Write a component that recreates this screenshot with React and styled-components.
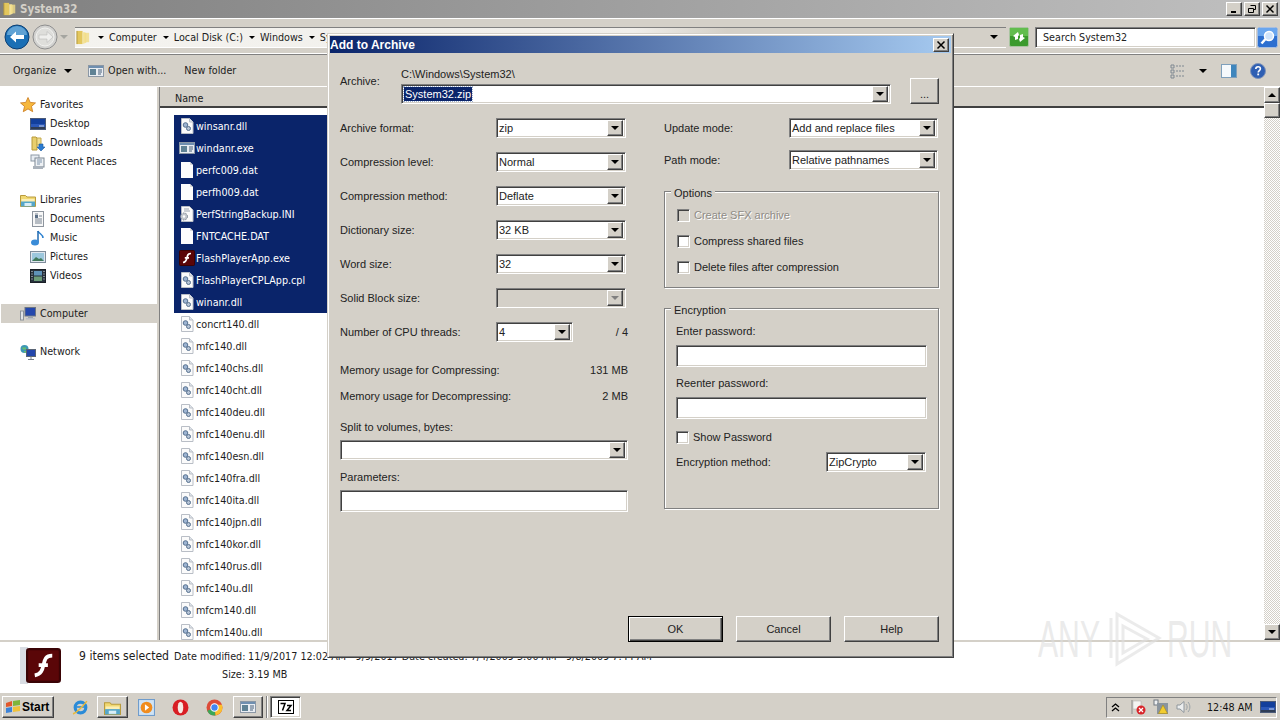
import React from 'react'
import styled, { createGlobalStyle, css } from 'styled-components'

const FACE = '#d4d0c8'

const GlobalStyle = createGlobalStyle`
  html, body { margin: 0; padding: 0; background: #fff; }
  #root { width: 1280px; height: 720px; overflow: hidden; }
  * { box-sizing: border-box; }
`

const raised = css`
  background: ${FACE};
  border: 1px solid;
  border-color: #fff #404040 #404040 #fff;
  box-shadow: inset -1px -1px 0 #808080;
`

const sunken = css`
  background: #fff;
  border: 1px solid;
  border-color: #808080 #fff #fff #808080;
  box-shadow: inset 1px 1px 0 #404040, inset -1px -1px 0 ${FACE};
`

/* ---------- icons ---------- */

const Svg = styled.svg`
  display: block;
  flex-shrink: 0;
`

const Icon = ({ size = 16, box = 16, children }) => (
  <Svg width={size} height={size} viewBox={`0 0 ${box} ${box}`}>{children}</Svg>
)

const Page = () => (
  <path d="M2.5.5h8l3.5 3.5v11.5h-11.5z" fill="#fbfbfb" stroke="#b9bec6" />
)

const DllIcon = () => (
  <Icon>
    <Page />
    <path d="M10.500.5v3.500h3.500" fill="#dfe4ea" stroke="#b9bec6" />
    <circle cx="6.500" cy="7" r="2.300" fill="#9db4d2" stroke="#56708f" />
    <circle cx="9.500" cy="10.500" r="2" fill="#b6c4d6" stroke="#56708f" />
  </Icon>
)

const ExeIcon = () => (
  <Icon>
    <rect x=".5" y="2.500" width="15" height="11" fill="#e9edf2" stroke="#8b97a5" />
    <rect x="1" y="3" width="14" height="2" fill="#6f8fb0" />
    <rect x="2" y="6" width="6" height="6" fill="#5f8295" />
    <path d="M10 7h4M10 9h4M10 11h3" stroke="#49617a" />
  </Icon>
)

const BlankIcon = () => (
  <Icon>
    <path d="M2 0h9l3 3v13h-12z" fill="#fdfdfd" />
    <path d="M11 0v3h3" fill="#dcdcdc" />
  </Icon>
)

const IniIcon = () => (
  <Icon>
    <Page />
    <path d="M5 3h5M5 5h6" stroke="#9aa3ad" />
    <circle cx="5" cy="10.500" r="3.500" fill="#c2c7cd" stroke="#7b8590" strokeDasharray="1.500 1" />
    <circle cx="5" cy="10.500" r="1.200" fill="#fff" />
  </Icon>
)

const FlashIcon = ({ size = 16 }) => (
  <Icon size={size}>
    <rect x=".5" y=".5" width="15" height="15" rx="1" fill="#5a0608" stroke="#3a0305" />
    <path d="M12 3.500c-3 0-3.400 1.600-4 4.200-.5 2.300-1 4.300-4 4.800M5.800 7.800h4.200" fill="none" stroke="#fff" strokeWidth="1.700" />
  </Icon>
)

const StarIcon = () => (
  <Icon>
    <path d="M8 .5l2.200 4.900 5.300.5-4 3.500 1.200 5.300L8 11.900l-4.700 2.800 1.200-5.300-4-3.500 5.300-.5z" fill="#f6b73c" stroke="#c9791c" strokeWidth=".8" />
  </Icon>
)

const DesktopIcon = () => (
  <Icon>
    <rect x=".5" y="2.500" width="15" height="11" fill="#2a57b8" stroke="#4a5a78" />
    <rect x="1" y="3" width="14" height="5" fill="#123f9c" />
    <rect x="1" y="11" width="14" height="2" fill="#2f3d55" />
    <path d="M9 10h5" stroke="#c9d7ee" />
  </Icon>
)

const DownloadsIcon = () => (
  <Icon>
    <path d="M2 2h4l1 1v12h-5z" fill="#e8cf6d" stroke="#b89a3a" />
    <path d="M7 3h4v7h-4z" fill="#f1df91" stroke="#c5ab51" />
    <path d="M9 9h4v3h2l-4 4-4-4h2z" fill="#2c7bd0" stroke="#1c5aa0" strokeWidth=".6" />
  </Icon>
)

const RecentIcon = () => (
  <Icon>
    <rect x="1" y="1" width="8" height="6" fill="#e8edf2" stroke="#8d99a6" />
    <rect x="5" y="4" width="9" height="9" fill="#eef1f4" stroke="#7d8894" />
    <path d="M7 6h5M7 8h5M7 10h3" stroke="#7f95ad" />
    <rect x="3" y="12" width="10" height="3" fill="#aab2bb" />
  </Icon>
)

const LibraryIcon = ({ size = 16 }) => (
  <Icon size={size}>
    <path d="M.5 3.500h5l1.500 1.500h8.500v9.500h-15z" fill="#f0d872" stroke="#b99b3d" />
    <path d="M1.500 7h13v3h-13z" fill="#fbeeb4" />
    <path d="M1 9.500h14v5h-14z" fill="#55a6c9" />
    <path d="M4.500 14v-3h7v3" fill="#d9eef6" />
  </Icon>
)

const DocumentsIcon = () => (
  <Icon>
    <rect x="2.500" y=".5" width="11" height="15" fill="#f7f7f7" stroke="#8e959e" />
    <path d="M5 3h3M9 5h3M5 8h7M5 10h7M5 12h7" stroke="#768290" />
    <rect x="5" y="4" width="3" height="3" fill="#5c6f86" />
  </Icon>
)

const MusicIcon = () => (
  <Icon>
    <path d="M8 1c1 3 5 3 5 7" fill="none" stroke="#2a7fcf" strokeWidth="1.500" />
    <path d="M8 1v11" stroke="#1e68b0" strokeWidth="1.500" />
    <ellipse cx="5" cy="12.500" rx="4" ry="3" fill="#3a8cd8" />
  </Icon>
)

const PicturesIcon = () => (
  <Icon>
    <rect x=".5" y="2.500" width="15" height="11" fill="#dfe6ee" stroke="#7f8c9a" />
    <rect x="2" y="4" width="12" height="8" fill="#9cc7dd" />
    <path d="M2 12l4-4 3 2 2-1 3 3z" fill="#417a5c" />
  </Icon>
)

const VideosIcon = () => (
  <Icon>
    <rect x=".5" y="1.500" width="15" height="13" fill="#27323d" stroke="#1a1f26" />
    <rect x="4" y="3" width="8" height="4.500" fill="#5f93b8" />
    <rect x="4" y="8.500" width="8" height="4.500" fill="#6c9c78" />
    <path d="M2 3v1M2 5.500v1M2 8v1M2 10.500v1M14 3v1M14 5.500v1M14 8v1M14 10.500v1" stroke="#dfe4e8" />
  </Icon>
)

const ComputerIcon = () => (
  <Icon>
    <rect x="5" y="1.500" width="10.500" height="8.500" fill="#2347ad" stroke="#6a7484" />
    <rect x="8" y="10" width="5" height="2" fill="#9aa2ac" />
    <rect x=".5" y="5" width="3" height="9" fill="#dfe2e6" stroke="#8a919a" />
    <rect x="6" y="12" width="9" height="1.500" fill="#b9bec5" />
  </Icon>
)

const NetworkIcon = () => (
  <Icon>
    <circle cx="4.500" cy="5" r="4" fill="#3d97b5" />
    <path d="M2 3.500h4v2h-3zM4 7h2v1.500h-2z" fill="#6cc06a" />
    <rect x="6.500" y="5.500" width="9" height="7" fill="#2347ad" stroke="#5a6575" />
    <path d="M11 12.500v2.500M8 15.500h6" stroke="#77808c" />
  </Icon>
)

const FolderIcon = ({ size = 15 }) => (
  <Icon size={size}>
    <path d="M1 1h6v14h-6z" fill="#e3c75e" />
    <path d="M7 2.500h2.500l1.500 1v10l-4 1.500z" fill="#f4e39a" />
    <path d="M9 3h5v10h-5z" fill="#f1dc86" opacity=".8" />
    <path d="M1 1v14" stroke="#b1953a" />
  </Icon>
)

const fileIcons = { dll: DllIcon, exe: ExeIcon, blank: BlankIcon, ini: IniIcon, flash: FlashIcon }

/* ---------- data ---------- */

const navRows = [
  { name: 'Favorites', icon: StarIcon, head: true },
  { name: 'Desktop', icon: DesktopIcon },
  { name: 'Downloads', icon: DownloadsIcon },
  { name: 'Recent Places', icon: RecentIcon },
  { gap: true },
  { name: 'Libraries', icon: LibraryIcon, head: true },
  { name: 'Documents', icon: DocumentsIcon },
  { name: 'Music', icon: MusicIcon },
  { name: 'Pictures', icon: PicturesIcon },
  { name: 'Videos', icon: VideosIcon },
  { gap: true },
  { name: 'Computer', icon: ComputerIcon, head: true, active: true },
  { gap: true },
  { name: 'Network', icon: NetworkIcon, head: true }
]

const files = [
  ['winsanr.dll', 'dll', true],
  ['windanr.exe', 'exe', true],
  ['perfc009.dat', 'blank', true],
  ['perfh009.dat', 'blank', true],
  ['PerfStringBackup.INI', 'ini', true],
  ['FNTCACHE.DAT', 'blank', true],
  ['FlashPlayerApp.exe', 'flash', true],
  ['FlashPlayerCPLApp.cpl', 'dll', true],
  ['winanr.dll', 'dll', true],
  ['concrt140.dll', 'dll'],
  ['mfc140.dll', 'dll'],
  ['mfc140chs.dll', 'dll'],
  ['mfc140cht.dll', 'dll'],
  ['mfc140deu.dll', 'dll'],
  ['mfc140enu.dll', 'dll'],
  ['mfc140esn.dll', 'dll'],
  ['mfc140fra.dll', 'dll'],
  ['mfc140ita.dll', 'dll'],
  ['mfc140jpn.dll', 'dll'],
  ['mfc140kor.dll', 'dll'],
  ['mfc140rus.dll', 'dll'],
  ['mfc140u.dll', 'dll'],
  ['mfcm140.dll', 'dll'],
  ['mfcm140u.dll', 'dll'],
  ['mfcm140v.dll', 'dll']
]

const crumbs = ['Computer', 'Local Disk (C:)', 'Windows', 'System32']

const leftFields = [
  ['Archive format:', 'zip'],
  ['Compression level:', 'Normal'],
  ['Compression method:', 'Deflate'],
  ['Dictionary size:', '32 KB'],
  ['Word size:', '32']
]

/* ---------- explorer ---------- */

const Desk = styled.div`
  position: relative;
  width: 1280px;
  height: 720px;
  display: flex;
  flex-direction: column;
  font-family: "DejaVu Sans Condensed", "DejaVu Sans", sans-serif;
  font-stretch: condensed;
  font-size: 10.700px;
  color: #1c1c1c;
  overflow: hidden;
`

const TitleBar = styled.div`
  height: 18px;
  flex-shrink: 0;
  display: flex;
  align-items: center;
  padding: 0 2px 0 3px;
  background: linear-gradient(90deg, #808080, #c0c0c0);
`

const TitleText = styled.span`
  margin-left: 3px;
  font-weight: bold;
  font-size: 11.500px;
  color: ${FACE};
`

const WindowButtons = styled.div`
  margin-left: auto;
  display: flex;
  gap: 2px;
`

const WindowButton = styled.div`
  ${raised}
  width: 16px;
  height: 14px;
  display: flex;
  align-items: center;
  justify-content: center;
`

const NavBar = styled.div`
  height: 37px;
  flex-shrink: 0;
  display: flex;
  align-items: center;
  padding: 1px 2px 0 4px;
  background: ${FACE};
  border-top: 1px solid #fff;
  border-bottom: 1px solid #808080;
  box-shadow: inset 0 -1px 0 #fff;
`

const ArrowDown = styled.i`
  display: block;
  flex-shrink: 0;
  width: 0;
  height: 0;
  border-left: ${p => p.$size || 4}px solid transparent;
  border-right: ${p => p.$size || 4}px solid transparent;
  border-top: ${p => p.$size || 4}px solid ${p => p.$color || '#000'};
`

const ArrowUp = styled(ArrowDown)`
  border-top: 0;
  border-bottom: 4px solid #000;
`

const ViewsArrow = styled(ArrowDown)`
  margin-right: 1px;
`

const HistoryDrop = styled.div`
  margin: 0 7px 0 2px;
`

const Address = styled.div`
  flex: 1;
  height: 21px;
  display: flex;
  align-items: center;
  padding-left: 1px;
  padding-right: 8px;
  background: linear-gradient(90deg, #f4f3ef 0, #f0eeea 60%, ${FACE} 70%);
  border-top: 1px solid #808080;
  border-bottom: 1px solid #fff;
`

const Crumb = styled.div`
  display: flex;
  align-items: center;
  gap: 5px;
  margin-left: 6px;
  white-space: nowrap;
  &:first-of-type { margin-left: 7px; }
`

const AddressDrop = styled.div`
  margin-left: auto;
`

const RefreshButton = styled.div`
  margin-left: 3px;
  flex-shrink: 0;
`

const SearchBox = styled.div`
  ${sunken}
  width: 221px;
  height: 21px;
  margin-left: 6px;
  display: flex;
  align-items: center;
  padding-left: 7px;
  color: #222;
`

const SearchButton = styled.div`
  margin-left: 1px;
  flex-shrink: 0;
`

const CommandBar = styled.div`
  height: 32px;
  flex-shrink: 0;
  display: flex;
  align-items: center;
  background: ${FACE};
  padding: 0 14px 0 13px;
  border-bottom: 1px solid #fff;
`

const Command = styled.div`
  display: flex;
  align-items: center;
  gap: ${p => p.$gap || 4}px;
  margin-right: ${p => p.$after || 0}px;
`

const CommandRight = styled.div`
  margin-left: auto;
  display: flex;
  align-items: center;
  gap: 13px;
`

const Main = styled.div`
  flex: 1;
  min-height: 0;
  display: flex;
`

const Sidebar = styled.div`
  width: 158px;
  flex-shrink: 0;
  padding: 8px 0 0 1px;
  background: #fff;
  border-right: 1px solid ${FACE};
`

const NavRow = styled.div`
  height: 19px;
  display: flex;
  align-items: center;
  gap: 4px;
  padding-left: ${p => (p.$head ? 19 : 29)}px;
  background: ${p => (p.$active ? FACE : 'transparent')};
`

const Gutter = styled.div`
  width: 2px;
  background: ${FACE};
  border-right: 1px solid #808080;
  flex-shrink: 0;
`

const ListArea = styled.div`
  flex: 1;
  min-width: 0;
  display: flex;
  flex-direction: column;
  overflow: hidden;
`

const ListHeader = styled.div`
  height: 21px;
  flex-shrink: 0;
  display: flex;
  align-items: center;
  padding: 3px 0 0 15px;
  background: ${FACE};
  border-bottom: 2px solid #404040;
`

const FileList = styled.div`
  flex: 1;
  min-height: 0;
  padding: 7px 0 0 14px;
  overflow: hidden;
  background: #fff;
`

const FileRow = styled.div`
  width: 160px;
  height: 22px;
  display: flex;
  align-items: center;
  gap: 1px;
  padding-left: 5px;
  background: ${p => (p.$selected ? '#0a246a' : 'transparent')};
  color: ${p => (p.$selected ? '#fff' : '#1c1c1c')};
  white-space: nowrap;
`

const Scrollbar = styled.div`
  width: 16px;
  flex-shrink: 0;
  display: flex;
  flex-direction: column;
  background: repeating-conic-gradient(${FACE} 0 25%, #fff 0 50%) 0 0 / 2px 2px;
`

const ScrollButton = styled.div`
  ${raised}
  height: 16px;
  flex-shrink: 0;
  display: flex;
  align-items: center;
  justify-content: center;
`

const ScrollThumb = styled.div`
  ${raised}
  height: 15px;
  flex-shrink: 0;
`

const ScrollSpace = styled.div`
  flex: 1;
`

const Details = styled.div`
  height: 52px;
  flex-shrink: 0;
  display: flex;
  padding: 5px 0 0 20px;
  background: #fff;
  border-top: 2px solid ${FACE};
`

const DetailsThumb = styled.div`
  position: relative;
  width: 41px;
  height: 37px;
  margin-right: 18px;
  flex-shrink: 0;
  background: linear-gradient(90deg, #d9dde3 0 8px, transparent 8px);
`

const DetailsFlash = styled.div`
  position: absolute;
  left: 6px;
  top: 1px;
`

const DetailsCount = styled.div`
  font-size: 12.100px;
  line-height: 16px;
  padding-top: 1px;
  margin-right: 5px;
  flex-shrink: 0;
  white-space: nowrap;
`

const DetailsGrid = styled.div`
  display: grid;
  grid-template-columns: 71px max-content;
  grid-auto-rows: 18px;
  column-gap: 3px;
  padding-top: 3px;
  flex-shrink: 0;
  white-space: nowrap;
`

const DetailsKey = styled.span`
  text-align: right;
`

/* ---------- taskbar ---------- */

const Taskbar = styled.div`
  height: 28px;
  flex-shrink: 0;
  display: flex;
  align-items: center;
  padding: 1px 3px 0 2px;
  background: ${FACE};
  border-top: 1px solid #fff;
`

const StartButton = styled.div`
  ${raised}
  width: 52px;
  height: 22px;
  display: flex;
  align-items: center;
  gap: 1px;
  padding-left: 2px;
  font-family: "Liberation Sans", sans-serif;
  font-weight: bold;
  font-size: 12px;
  color: #000;
  margin-right: 13px;
`

const TaskIcon = styled.div`
  width: ${p => p.$w || 34}px;
  flex-shrink: 0;
  display: flex;
  justify-content: center;
`

const TaskButton = styled.div`
  ${raised}
  width: ${p => p.$w || 31}px;
  height: 22px;
  flex-shrink: 0;
  display: flex;
  align-items: center;
  justify-content: center;
  margin: 0 ${p => p.$mr || 0}px 0 ${p => p.$ml || 0}px;
`

const PressedButton = styled(TaskButton)`
  ${sunken}
`

const TaskDivider = styled.div`
  width: 2px;
  height: 22px;
  margin: 0 2px 0 3px;
  border-left: 1px solid #808080;
  border-right: 1px solid #fff;
`

const Tray = styled.div`
  margin-left: auto;
  width: 171px;
  height: 21px;
  display: flex;
  align-items: center;
  padding-left: 4px;
  border: 1px solid;
  border-color: #808080 #fff #fff #808080;
`

const TrayItem = styled.div`
  margin-right: ${p => p.$mr || 0}px;
  flex-shrink: 0;
`

const Clock = styled.span`
  margin-right: 7px;
  white-space: nowrap;
  color: #111;
`

/* ---------- dialog ---------- */

const Dialog = styled.div`
  position: absolute;
  left: 327px;
  top: 33px;
  width: 627px;
  height: 625px;
  display: flex;
  flex-direction: column;
  padding: 2px 0 0 2px;
  background: ${FACE};
  border: 1px solid;
  border-color: ${FACE} #404040 #404040 ${FACE};
  box-shadow: inset 1px 1px 0 #fff, inset -1px -1px 0 #808080;
  font-family: "Liberation Sans", sans-serif;
  font-size: 11px;
  color: #222;
`

const DialogTitle = styled.div`
  height: 17px;
  margin-right: 2px;
  flex-shrink: 0;
  display: flex;
  align-items: center;
  justify-content: space-between;
  padding: 0 2px 0 0;
  background: linear-gradient(90deg, #0a246a, #a6caf0);
  color: #fff;
  font-weight: bold;
  font-size: 12px;
`

const DialogClose = styled.div`
  ${raised}
  width: 16px;
  height: 14px;
  display: flex;
  align-items: center;
  justify-content: center;
`

const DialogBody = styled.div`
  flex: 1;
  display: flex;
  flex-direction: column;
  padding: 14px 14px 0 10px;
`

const ArchiveBlock = styled.div`
  display: flex;
  align-items: flex-end;
  margin-bottom: 5px;
`

const ArchiveLabel = styled.div`
  width: 61px;
  align-self: flex-start;
  padding-top: 8px;
`

const ArchivePath = styled.div`
  width: 490px;
`

const PathText = styled.div`
  height: 17px;
  line-height: 14px;
`

const BrowseButton = styled.div`
  ${raised}
  width: 29px;
  height: 26px;
  margin-left: 19px;
  display: flex;
  align-items: flex-end;
  justify-content: center;
  padding-bottom: 4px;
  line-height: 10px;
`

const Columns = styled.div`
  display: grid;
  grid-template-columns: 288px 275px;
  column-gap: 36px;
  margin-top: 2px;
`

const Column = styled.div`
  display: flex;
  flex-direction: column;
`

const FieldRow = styled.div`
  height: ${p => p.$h || 34}px;
  display: grid;
  grid-template-columns: ${p => p.$label || 156}px 1fr;
  align-items: center;
  margin-top: ${p => p.$mt || 0}px;
`

const ThreadsValue = styled.div`
  display: flex;
  align-items: center;
  justify-content: space-between;
`

const MetricRow = styled.div`
  height: 26px;
  display: flex;
  align-items: center;
  justify-content: space-between;
  margin-top: ${p => p.$mt || 0}px;
`

const Caption = styled.div`
  height: 14px;
  line-height: 14px;
  margin: ${p => p.$mt || 0}px 0 ${p => p.$mb || 7}px;
`

const ComboBox = styled.div`
  ${sunken}
  width: ${p => (p.$w ? `${p.$w}px` : '100%')};
  height: ${p => p.$h || 20}px;
  display: flex;
  align-items: center;
  justify-content: space-between;
  padding: 0 2px 0 2px;
  background: ${p => (p.$disabled ? FACE : '#fff')};
  white-space: nowrap;
`

const ComboArrow = styled.div`
  ${raised}
  width: 16px;
  height: 16px;
  flex-shrink: 0;
  display: flex;
  align-items: center;
  justify-content: center;
`

const Selected = styled.span`
  background: #0a246a;
  color: #fff;
  outline: 1px dotted #9db0d0;
  padding: 1px 1px;
`

const TextInput = styled.div`
  ${sunken}
  height: 22px;
`

const GroupBox = styled.div`
  position: relative;
  height: ${p => p.$h}px;
  margin-top: ${p => p.$mt || 0}px;
  padding: ${p => p.$pad};
  border: 1px solid #808080;
  box-shadow: 1px 1px 0 #fff, inset 1px 1px 0 #fff;
`

const GroupTitle = styled.div`
  position: absolute;
  left: 6px;
  top: -5px;
  padding: 0 3px;
  line-height: 13px;
  background: ${FACE};
`

const CheckRow = styled.div`
  height: 26px;
  display: flex;
  align-items: center;
  gap: 4px;
  margin-top: ${p => p.$mt || 0}px;
  color: ${p => (p.$disabled ? '#8f8c86' : 'inherit')};
  text-shadow: ${p => (p.$disabled ? '1px 1px 0 #fff' : 'none')};
`

const CheckBox = styled.div`
  ${sunken}
  width: 13px;
  height: 13px;
  flex-shrink: 0;
  background: ${p => (p.$disabled ? FACE : '#fff')};
`

const DialogFooter = styled.div`
  margin-top: auto;
  display: flex;
  justify-content: flex-end;
  gap: 13px;
  padding: 0 0 15px;
`

const DialogButton = styled.div`
  ${raised}
  width: 95px;
  height: 26px;
  display: flex;
  align-items: center;
  justify-content: center;
  ${p => p.$primary && css`
    border-color: #000;
    box-shadow: inset 1px 1px 0 #fff, inset -1px -1px 0 #404040, inset -2px -2px 0 #808080;
  `}
`

/* ---------- watermark ---------- */

const Watermark = styled.div`
  position: absolute;
  left: 1038px;
  top: 608px;
  width: 200px;
  height: 62px;
  display: flex;
  align-items: center;
  pointer-events: none;
`

const WatermarkWord = styled.span`
  display: block;
  width: 63px;
  flex-shrink: 0;
  font-family: "Liberation Sans", sans-serif;
  font-size: 52px;
  line-height: 62px;
  color: rgba(222, 222, 222, 0.62);
  white-space: nowrap;
  transform: scaleX(0.58);
  transform-origin: 0 50%;
`

/* ---------- small compositions ---------- */

const Combo = ({ value, w, h, disabled }) => (
  <ComboBox $w={w} $h={h} $disabled={disabled}>
    <span>{value}</span>
    <ComboArrow><ArrowDown $color={disabled ? '#808080' : '#000'} /></ComboArrow>
  </ComboBox>
)

const App = () => {
  return (
    <Desk>
      <GlobalStyle />
      <TitleBar>
        <FolderIcon size={14} />
        <TitleText>System32</TitleText>
        <WindowButtons>
          <WindowButton>
            <Icon size={10} box={10}><path d="M2 8h5" stroke="#000" strokeWidth="2" /></Icon>
          </WindowButton>
          <WindowButton>
            <Icon size={10} box={10}><path d="M3.500 1.500h5v4h-2M1.500 4.500h5v4h-5z" fill="none" stroke="#000" /></Icon>
          </WindowButton>
          <WindowButton>
            <Icon size={10} box={10}><path d="M1.500 1.500l7 7M8.500 1.500l-7 7" stroke="#000" strokeWidth="1.500" /></Icon>
          </WindowButton>
        </WindowButtons>
      </TitleBar>

      <NavBar>
        <Icon size={26} box={26}>
          <circle cx="13" cy="13" r="12" fill="#1a6fb5" stroke="#0d3f72" />
          <path d="M3 11a10 9 0 0 1 20 0z" fill="#8fc5ea" opacity=".6" />
          <path d="M6 13l6-5.500v3.500h8v4h-8v3.500z" fill="#fff" />
        </Icon>
        <Icon size={28} box={28}>
          <circle cx="15" cy="14" r="12" fill="#d2d2d0" stroke="#8e8e8e" />
          <circle cx="15" cy="14" r="9" fill="#dededb" stroke="#f1f1ef" />
          <path d="M23 14l-6-5.500v3.500h-8v4h8v3.500z" fill="#efefed" stroke="#bbb" strokeWidth=".6" />
        </Icon>
        <HistoryDrop><ArrowDown $color="#a5a5a0" /></HistoryDrop>
        <Address>
          <FolderIcon />
          {crumbs.map(c => (
            <Crumb key={c}><ArrowDown $size={3} />{c}</Crumb>
          ))}
          <AddressDrop><ArrowDown /></AddressDrop>
        </Address>
        <RefreshButton>
          <Icon size={20} box={20}>
            <rect x=".5" y=".5" width="19" height="19" rx="1.500" fill="#3b9a2d" stroke="#a8c4a0" />
            <rect x="1" y="1" width="18" height="8" fill="#62bd4e" />
            <path d="M9 5l-5 4 2 1v3l3-1v-3l1-1zM11 15l5-4-2-1v-3l-3 1v3l-1 1z" fill="#fff" />
          </Icon>
        </RefreshButton>
        <SearchBox>Search System32</SearchBox>
        <SearchButton>
          <Icon size={21} box={21}>
            <rect x=".5" y=".5" width="20" height="20" rx="2" fill="#2d6fd0" stroke="#a9bfe0" />
            <rect x="1" y="1" width="19" height="8" fill="#6aa6ee" />
            <circle cx="12" cy="9" r="4.500" fill="#cfe3fa" stroke="#fff" strokeWidth="1.500" />
            <path d="M8.500 12l-4 4.500" stroke="#fff" strokeWidth="2.500" />
          </Icon>
        </SearchButton>
      </NavBar>

      <CommandBar>
        <Command $gap={8} $after={16}>Organize <ArrowDown /></Command>
        <Command $after={18}><ExeIcon />Open with...</Command>
        <Command>New folder</Command>
        <CommandRight>
          <Icon>
            <path d="M1 2h3v3h-3zM1 7h3v3h-3zM1 12h3v3h-3z" fill="none" stroke="#7f8891" />
            <path d="M6 3h9M6 8h9M6 13h9" stroke="#7f8891" strokeDasharray="2 1" />
          </Icon>
          <ViewsArrow />
          <Icon>
            <rect x=".5" y="1.500" width="15" height="13" fill="#f6f9fc" stroke="#7fa0bc" />
            <rect x="10" y="2" width="5" height="12" fill="#3f86bd" />
          </Icon>
          <Icon>
            <circle cx="8" cy="8" r="7.500" fill="#2f5fb3" stroke="#7f93b8" />
            <path d="M5.800 6c0-3 4.600-3 4.600-.2 0 1.800-2.200 1.800-2.200 3.700" fill="none" stroke="#fff" strokeWidth="1.600" />
            <rect x="7.300" y="10.500" width="1.800" height="1.800" fill="#fff" />
          </Icon>
        </CommandRight>
      </CommandBar>

      <Main>
        <Sidebar>
          {navRows.map((r, i) => r.gap ? (
            <NavRow key={i} />
          ) : (
            <NavRow key={r.name} $head={r.head} $active={r.active}>
              <r.icon />{r.name}
            </NavRow>
          ))}
        </Sidebar>
        <Gutter />
        <ListArea>
          <ListHeader>Name</ListHeader>
          <FileList>
            {files.map(([name, kind, selected]) => {
              const FileIcon = fileIcons[kind]
              return (
                <FileRow key={name} $selected={selected}>
                  <FileIcon />{name}
                </FileRow>
              )
            })}
          </FileList>
        </ListArea>
        <Scrollbar>
          <ScrollButton><ArrowUp /></ScrollButton>
          <ScrollThumb />
          <ScrollSpace />
          <ScrollButton><ArrowDown /></ScrollButton>
        </Scrollbar>
      </Main>

      <Details>
        <DetailsThumb>
          <DetailsFlash><FlashIcon size={35} /></DetailsFlash>
        </DetailsThumb>
        <DetailsCount>9 items selected</DetailsCount>
        <DetailsGrid>
          <DetailsKey>Date modified:</DetailsKey>
          <span>11/9/2017 12:02 AM - 9/9/2017 Date created: 7/4/2009 5:00 AM - 9/8/2009 7:44 AM</span>
          <DetailsKey>Size:</DetailsKey>
          <span>3.19 MB</span>
        </DetailsGrid>
      </Details>

      <Taskbar>
        <StartButton>
          <Icon>
            <path d="M1 4l6-2v5l-6 1z" fill="#e2582c" />
            <path d="M8 2l7-1v5l-7 1z" fill="#7fb53c" />
            <path d="M1 9l6-1v5l-6 1z" fill="#3c83d8" />
            <path d="M8 8l7-1v5l-7 1z" fill="#f0c23a" />
          </Icon>
          Start
        </StartButton>
        <TaskIcon $w={27}>
          <Icon size={17}>
            <circle cx="8" cy="8" r="5" fill="none" stroke="#2a8bd8" strokeWidth="3" />
            <path d="M4 7.500h8" stroke="#2a8bd8" strokeWidth="1.500" />
            <path d="M1 14c3-1 9-7 13-12" fill="none" stroke="#e8b93a" strokeWidth="1.500" />
          </Icon>
        </TaskIcon>
        <TaskButton $ml={3}><LibraryIcon size={17} /></TaskButton>
        <TaskIcon $w={36}>
          <Icon size={17}>
            <rect x=".5" y=".5" width="15" height="15" fill="#cfe3f5" stroke="#6f9ccc" />
            <circle cx="8" cy="8" r="5.500" fill="#f08c1e" />
            <path d="M6.500 5l4 3-4 3z" fill="#fff" />
          </Icon>
        </TaskIcon>
        <TaskIcon $w={32}>
          <Icon size={17}>
            <ellipse cx="8" cy="8" rx="7.500" ry="7.500" fill="#d81e24" />
            <ellipse cx="8" cy="8" rx="2.600" ry="5.500" fill="#f5e9e4" />
          </Icon>
        </TaskIcon>
        <TaskIcon $w={36}>
          <Icon size={17}>
            <circle cx="8" cy="8" r="7.500" fill="#dd4b39" />
            <path d="M8 8L1.200 11A7.500 7.500 0 0 0 9 15.500z" fill="#3aa757" />
            <path d="M8 8l1 7.500A7.500 7.500 0 0 0 15 5.500H8z" fill="#fbc02d" />
            <circle cx="8" cy="8" r="3.500" fill="#4285f4" stroke="#fff" />
          </Icon>
        </TaskIcon>
        <TaskButton $w={30} $ml={1}><ExeIcon /></TaskButton>
        <TaskDivider />
        <PressedButton $w={31}>
          <Icon>
            <rect x=".5" y="1.500" width="15" height="13" fill="#fff" stroke="#000" />
            <path d="M2.500 4.500h4.500l-2.500 7M9 6.500h4l-4 5h4" fill="none" stroke="#000" strokeWidth="1.500" />
          </Icon>
        </PressedButton>
        <Tray>
          <TrayItem $mr={10}>
            <Icon size={9} box={9}>
              <path d="M1 4l3.500-3 3.500 3M1 8l3.500-3 3.500 3" fill="none" stroke="#000" strokeWidth="1.300" />
            </Icon>
          </TrayItem>
          <TrayItem $mr={7}>
            <Icon>
              <path d="M2 1v14" stroke="#8a8a8a" />
              <path d="M3 2h8v8h-8z" fill="#f3f3f1" stroke="#aaa" strokeWidth=".5" />
              <circle cx="11" cy="11" r="4.500" fill="#d8242a" />
              <path d="M9 9l4 4M13 9l-4 4" stroke="#fff" strokeWidth="1.300" />
            </Icon>
          </TrayItem>
          <TrayItem $mr={7}>
            <Icon>
              <rect x="1" y="1" width="4" height="5" fill="#eef0f2" stroke="#6f7780" />
              <rect x="4" y="4" width="11" height="11" fill="#8a949e" />
              <path d="M10 6l4.500 8.500h-9z" fill="#f2cc2f" stroke="#aa8a14" strokeWidth=".6" />
            </Icon>
          </TrayItem>
          <TrayItem $mr={15}>
            <Icon>
              <path d="M1 6h3l4-3.500v11l-4-3.500h-3z" fill="#eceeef" stroke="#8f969c" />
              <path d="M10 5c1.500 2 1.500 4 0 6M12 3c2.500 3 2.500 7 0 10" fill="none" stroke="#9aa2a8" />
            </Icon>
          </TrayItem>
          <Clock>12:48 AM</Clock>
          <DesktopIcon />
        </Tray>
      </Taskbar>

      <Watermark>
        <WatermarkWord>ANY</WatermarkWord>
        <Svg width="66" height="62" viewBox="0 0 66 62">
          <path d="M10 10v40M16 6l42 24-42 26z M22 18l24 13-24 14z" fill="none" stroke="rgba(222,222,222,.62)" strokeWidth="3" />
        </Svg>
        <WatermarkWord>RUN</WatermarkWord>
      </Watermark>

      <Dialog>
        <DialogTitle>
          Add to Archive
          <DialogClose>
            <Icon size={10} box={10}><path d="M1.500 1.500l7 7M8.500 1.500l-7 7" stroke="#000" strokeWidth="1.500" /></Icon>
          </DialogClose>
        </DialogTitle>
        <DialogBody>
          <ArchiveBlock>
            <ArchiveLabel>Archive:</ArchiveLabel>
            <ArchivePath>
              <PathText>C:\Windows\System32\</PathText>
              <ComboBox>
                <Selected>System32.zip</Selected>
                <ComboArrow><ArrowDown /></ComboArrow>
              </ComboBox>
            </ArchivePath>
            <BrowseButton>...</BrowseButton>
          </ArchiveBlock>

          <Columns>
            <Column>
              {leftFields.map(([label, value]) => (
                <FieldRow key={label}>
                  {label}
                  <Combo value={value} w={130} />
                </FieldRow>
              ))}
              <FieldRow>
                Solid Block size:
                <Combo value="" w={130} disabled />
              </FieldRow>
              <FieldRow>
                Number of CPU threads:
                <ThreadsValue>
                  <Combo value="4" w={77} />
                  <span>/ 4</span>
                </ThreadsValue>
              </FieldRow>
              <MetricRow $mt={8}>
                <span>Memory usage for Compressing:</span>
                <span>131 MB</span>
              </MetricRow>
              <MetricRow>
                <span>Memory usage for Decompressing:</span>
                <span>2 MB</span>
              </MetricRow>
              <Caption $mt={11} $mb={6}>Split to volumes, bytes:</Caption>
              <Combo value="" />
              <Caption $mt={10} $mb={6}>Parameters:</Caption>
              <TextInput />
            </Column>

            <Column>
              <FieldRow $label={125}>
                Update mode:
                <Combo value="Add and replace files" w={149} />
              </FieldRow>
              <FieldRow $label={125} $h={30}>
                Path mode:
                <Combo value="Relative pathnames" w={149} />
              </FieldRow>

              <GroupBox $h={97} $mt={16} $pad="10px 12px 0">
                <GroupTitle>Options</GroupTitle>
                <CheckRow $disabled><CheckBox $disabled />Create SFX archive</CheckRow>
                <CheckRow><CheckBox />Compress shared files</CheckRow>
                <CheckRow><CheckBox />Delete files after compression</CheckRow>
              </GroupBox>

              <GroupBox $h={201} $mt={20} $pad="15px 11px 0">
                <GroupTitle>Encryption</GroupTitle>
                <Caption>Enter password:</Caption>
                <TextInput />
                <Caption $mt={9}>Reenter password:</Caption>
                <TextInput />
                <CheckRow $mt={5}><CheckBox />Show Password</CheckRow>
                <FieldRow $h={24} $label={150}>
                  Encryption method:
                  <Combo value="ZipCrypto" w={100} />
                </FieldRow>
              </GroupBox>
            </Column>
          </Columns>

          <DialogFooter>
            <DialogButton $primary>OK</DialogButton>
            <DialogButton>Cancel</DialogButton>
            <DialogButton>Help</DialogButton>
          </DialogFooter>
        </DialogBody>
      </Dialog>
    </Desk>
  )
}

export default App
